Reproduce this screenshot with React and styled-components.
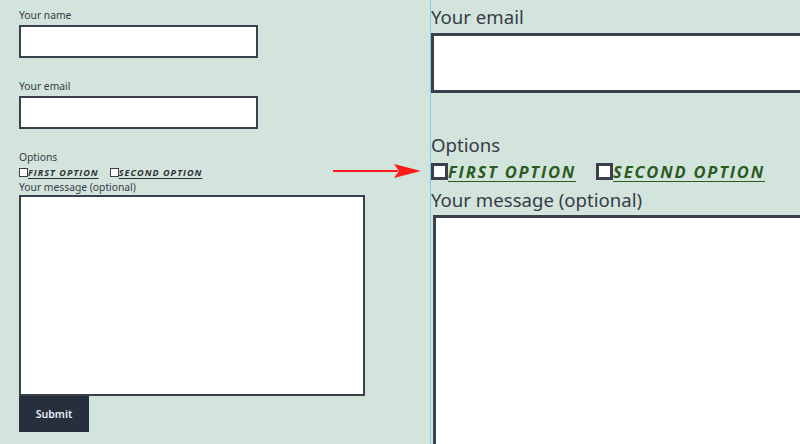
import React from 'react';
import styled, { createGlobalStyle } from 'styled-components';

const GlobalStyle = createGlobalStyle`
  html, body {
    margin: 0;
    padding: 0;
    background: #d3e4dc;
    overflow: hidden;
  }
  body {
    font-family: "Noto Sans", "Open Sans", sans-serif;
    color: #2f3440;
  }
`;

const Page = styled.div`
  position: relative;
  display: grid;
  grid-template-columns: 430px 1px 1fr;
  width: 800px;
  height: 444px;
  overflow: hidden;
  background: #d3e4dc;
`;

const Divider = styled.div`
  background: #74cff2;
`;

const Pane = styled.form`
  display: flex;
  flex-direction: column;
  align-items: flex-start;
  overflow: hidden;
  padding: ${({ $big }) => ($big ? '3px 0 0 0' : '8px 0 0 19px')};
`;

const Label = styled.label`
  display: block;
  font-size: ${({ $big }) => ($big ? '18.6px' : '10.3px')};
  line-height: ${({ $big }) => ($big ? '27px' : '15px')};
  color: #363b47;
  margin-bottom: ${({ $big }) => ($big ? '3px' : '2px')};
  white-space: nowrap;
`;

const Input = styled.input`
  box-sizing: border-box;
  display: block;
  background: #fff;
  border: ${({ $big }) => ($big ? '3.5px' : '2px')} solid #3a414d;
  width: ${({ $big }) => ($big ? '420px' : '239px')};
  height: ${({ $big }) => ($big ? '60px' : '33px')};
  margin: 0 0 ${({ $big }) => ($big ? '38px' : '21px')} 0;
  padding: 0;
  flex-shrink: 0;
`;

const OptionRow = styled.div`
  display: flex;
  align-items: center;
  gap: ${({ $big }) => ($big ? '20px' : '11px')};
  height: ${({ $big }) => ($big ? '22px' : '12px')};
  margin: ${({ $big }) => ($big ? '2px 0 4px' : '1px 0 2px')};
`;

const Option = styled.label`
  display: flex;
  align-items: center;
`;

const Box = styled.span`
  box-sizing: border-box;
  display: inline-block;
  width: ${({ $big }) => ($big ? '17px' : '9px')};
  height: ${({ $big }) => ($big ? '17px' : '9px')};
  background: #fff;
  border: ${({ $big }) => ($big ? '3px' : '1.5px')} solid #3a414d;
`;

const OptionText = styled.span`
  font-family: "Open Sans", "Noto Sans", sans-serif;
  font-weight: 700;
  font-style: italic;
  text-transform: uppercase;
  text-decoration: underline;
  text-underline-offset: ${({ $big }) => ($big ? '3px' : '2px')};
  font-size: ${({ $big }) => ($big ? '16.5px' : '9px')};
  letter-spacing: ${({ $big }) => ($big ? '1.8px' : '1.05px')};
  color: ${({ $big }) => ($big ? '#2a5b1f' : '#2d2f36')};
  white-space: nowrap;
`;

const TextArea = styled.textarea`
  box-sizing: border-box;
  display: block;
  resize: none;
  background: #fff;
  border: ${({ $big }) => ($big ? '3.5px' : '2px')} solid #3a414d;
  width: ${({ $big }) => ($big ? '420px' : '346px')};
  height: ${({ $big }) => ($big ? '400px' : '201px')};
  margin: 0 0 0 ${({ $big }) => ($big ? '2px' : '0')};
  padding: 0;
  flex-shrink: 0;
`;

const SubmitButton = styled.button`
  width: 70px;
  height: 36px;
  border: none;
  background: #272f3d;
  color: #eaf1f2;
  font-family: "Noto Sans", "Open Sans", sans-serif;
  font-size: 10.5px;
  font-weight: 600;
  padding: 0;
`;

const Arrow = styled.svg`
  position: absolute;
  left: 332px;
  top: 163px;
`;

const ContactForm = ({ big }) => (
  <Pane $big={big}>
    {!big && (
      <>
        <Label>Your name</Label>
        <Input />
      </>
    )}
    <Label $big={big}>Your email</Label>
    <Input $big={big} />
    <Label $big={big} style={{ marginBottom: 0 }}>Options</Label>
    <OptionRow $big={big}>
      <Option>
        <Box $big={big} />
        <OptionText $big={big}>First option</OptionText>
      </Option>
      <Option>
        <Box $big={big} />
        <OptionText $big={big}>Second option</OptionText>
      </Option>
    </OptionRow>
    <Label $big={big} style={{ marginBottom: big ? '2px' : '0' }}>Your message (optional)</Label>
    <TextArea $big={big} />
    {!big && <SubmitButton type="button">Submit</SubmitButton>}
  </Pane>
);

export default function App() {
  return (
    <>
      <GlobalStyle />
      <Page>
        <ContactForm />
        <Divider />
        <ContactForm big />
        <Arrow width="90" height="16" viewBox="0 0 90 16">
          <line x1="1" y1="8" x2="66" y2="8" stroke="#ff1a1a" strokeWidth="2" />
          <path d="M62 1 L89 8 L62 15 L67 8 Z" fill="#ff1a1a" />
        </Arrow>
      </Page>
    </>
  );
}
